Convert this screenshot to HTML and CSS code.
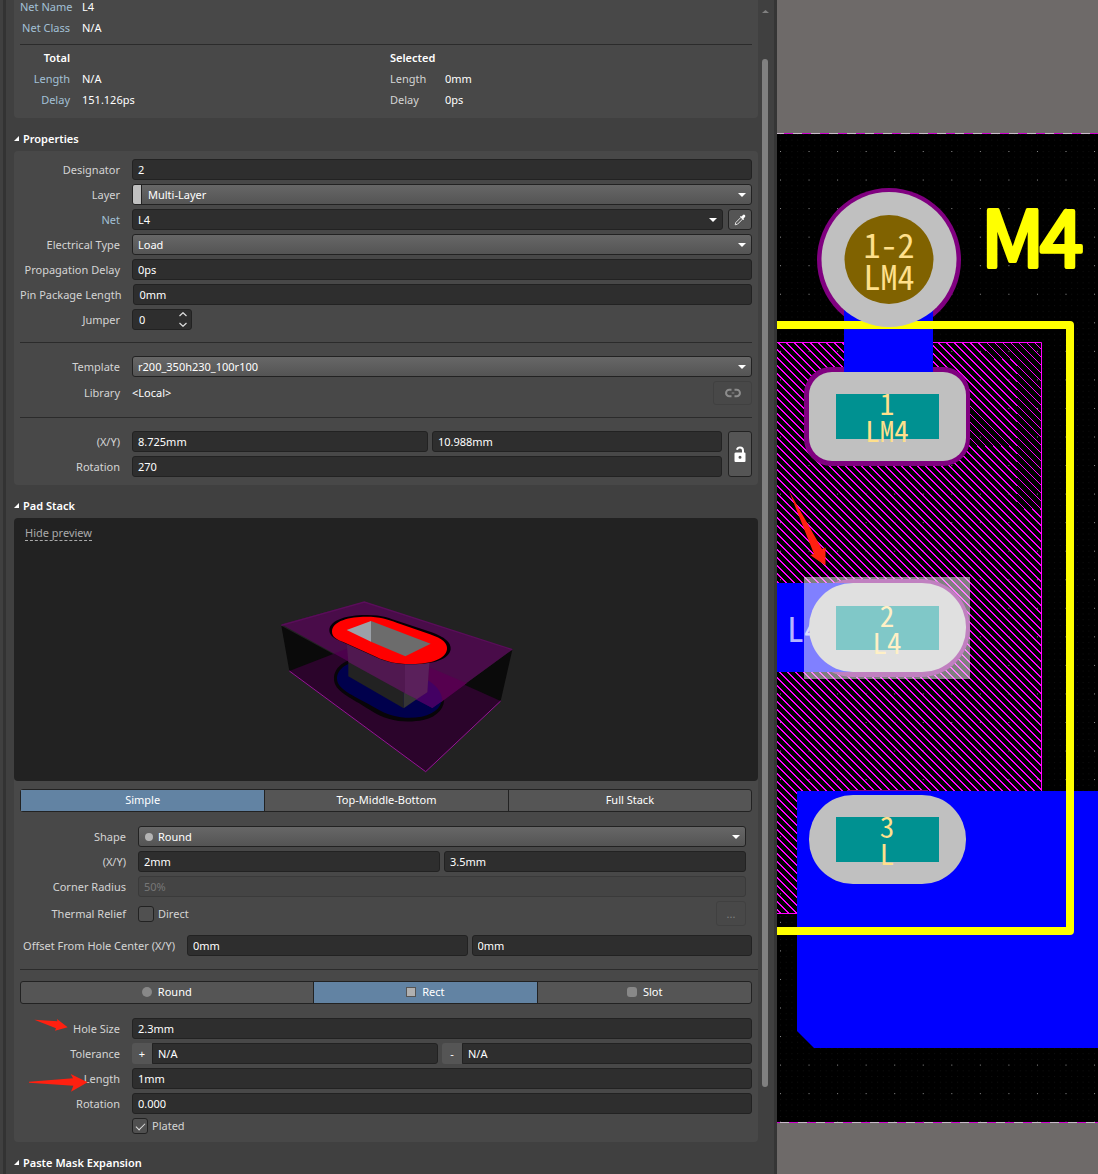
FILE: index.html
```html
<!DOCTYPE html>
<html lang="en">
<head>
<meta charset="utf-8">
<title>Pad Properties</title>
<link rel="stylesheet" href="styles.css">
</head>
<body>
<div class="workspace">
  <aside class="panel">
    <div class="panel-body">
      <section class="card net-info">
        <dl class="facts">
          <dt>Net Name</dt><dd>L4</dd>
          <dt>Net Class</dt><dd>N/A</dd>
        </dl>
        <hr class="rule">
        <div class="halves">
          <dl class="facts">
            <dt class="facts-title">Total</dt><dd></dd>
            <dt>Length</dt><dd>N/A</dd>
            <dt>Delay</dt><dd>151.126ps</dd>
          </dl>
          <dl class="facts facts-plain">
            <dt class="facts-title">Selected</dt><dd></dd>
            <dt>Length</dt><dd>0mm</dd>
            <dt>Delay</dt><dd>0ps</dd>
          </dl>
        </div>
      </section>

      <h2 class="heading"><svg class="caret" viewBox="0 0 5 5"><path d="M5 0V5H0Z"/></svg>Properties</h2>
      <section class="card padded">
        <div class="stack">
          <div class="row"><label for="designator">Designator</label><input class="field" id="designator" value="2"></div>
          <div class="row"><label for="layer">Layer</label><div class="drop drop-layer"><span class="swatch"></span><select id="layer"><option>Multi-Layer</option></select></div></div>
          <div class="row"><label class="linked" for="net">Net</label>
            <div class="drop drop-dark"><select id="net"><option>L4</option></select></div>
            <button class="btn icon-btn" aria-label="Pick net"><svg width="12" height="12" viewBox="0 0 12 12"><path d="M7 3.300 8.700 5 3.500 10.200 1.200 10.800 1.800 8.500Z" fill="none" stroke="#e4e4e4"/><path d="M6 2.600 6.800 1.900 7.500 2.500 9 .900Q10 .200 10.900 1.100T11 3L9.500 4.500 10.100 5.200 9.300 6Z" fill="#fff"/></svg></button>
          </div>
          <div class="row"><label for="etype">Electrical Type</label><div class="drop"><select id="etype"><option>Load</option></select></div></div>
          <div class="row"><label for="pdelay">Propagation Delay</label><input class="field" id="pdelay" value="0ps"></div>
          <div class="row"><label for="plength">Pin Package Length</label><input class="field" id="plength" value="0mm"></div>
          <div class="row"><label for="jumper">Jumper</label>
            <div class="spin"><input id="jumper" value="0"><svg width="8" height="15" viewBox="0 0 8 15"><path d="M.500 4 4 .700 7.500 4M.500 11 4 14.300 7.500 11" fill="none" stroke="#ddd" stroke-width="1.200"/></svg></div>
          </div>
        </div>
        <hr class="rule spaced">
        <div class="stack">
          <div class="row"><label for="template">Template</label><div class="drop"><select id="template"><option>r200_350h230_100r100</option></select></div></div>
          <div class="row"><span class="label">Library</span><output class="plain">&lt;Local&gt;</output>
            <button class="btn ghost link-btn" aria-label="Link library" disabled><svg width="16" height="10" viewBox="0 0 16 10"><path d="M6.500 1.700H4.300A3.200 3.200 0 0 0 4.300 8.200H6.500M9.500 1.700H11.700A3.200 3.200 0 0 1 11.700 8.200H9.500" fill="none" stroke="#8c8c8c" stroke-width="2"/><path d="M6.700 4.500H9.300V5.500H6.700Z" fill="#8c8c8c"/></svg></button>
          </div>
        </div>
        <hr class="rule spaced">
        <div class="locked">
          <div class="stack">
            <div class="row"><label for="posx">(X/Y)</label><div class="pair pair-pos"><input class="field" id="posx" value="8.725mm"><input class="field" aria-label="Y" value="10.988mm"></div></div>
            <div class="row"><label for="rot">Rotation</label><input class="field" id="rot" value="270"></div>
          </div>
          <button class="btn icon-btn" aria-label="Unlocked"><svg width="12" height="17" viewBox="0 0 12 17"><path d="M3 3.700Q3.500 1.500 6 1.500 9 1.500 9 4.500V8" fill="none" stroke="#fff" stroke-width="2"/><path fill-rule="evenodd" fill="#fff" d="M2 6.500H10.500Q11.500 6.500 11.500 7.500V15Q11.500 16 10.500 16H1.500Q.500 16 .500 15V7.500Q.500 6.500 2 6.500ZM6 9.800A1.500 1.500 0 1 0 6 12.800 1.500 1.500 0 1 0 6 9.800Z"/></svg></button>
        </div>
      </section>

      <h2 class="heading"><svg class="caret" viewBox="0 0 5 5"><path d="M5 0V5H0Z"/></svg>Pad Stack</h2>
      <section class="card">
        <div class="preview">
          <a class="hide-link" href="#preview">Hide preview</a>
          <svg class="model" id="preview" viewBox="-27 0 810 603">
            <path d="M64 137 517 384 757 209 722 363 497 575 88 273Z" fill="#0a0a0a"/>
            <path d="M88 273 320 183 722 363 497 575Z" fill="#2b042b"/>
            <path d="M330 238C270 226 222 254 222 296 222 335 270 350 330 390 380 425 440 430 490 420 535 410 556 380 552 350 548 325 520 305 480 288Z" fill="#080508"/>
            <path d="M330 246C275 236 231 262 231 296 231 330 290 350 345 383 395 413 440 418 485 410 530 400 550 375 544 348 538 325 510 310 480 296Z" fill="#00004c"/>
            <path d="M64 133 313 65 757 209 517 384Z" fill="#600060" fill-opacity=".640"/>
            <path d="M64 136 313 66 757 209" fill="none" stroke="#5a0d5a" stroke-width="4"/>
            <path d="M88 273 497 575 722 363" fill="none" stroke="#981498" stroke-width="3"/>
            <path d="M508 262 620 310 545 365 502 337Z" fill="#56004f"/>
            <path d="M502 300Q545 325 547 363L517 384 465 357 502 337Z" fill="#430063"/>
            <path d="M265 240V289L431 385V330Z" fill="#222"/>
            <path d="M431 330V385L470 358Z" fill="#353535"/>
            <path d="M260 188 435 250V340L265 246Z" fill="#501850"/>
            <path d="M435 250 508 248 502 337 470 358 435 340Z" fill="#5a205b"/>
            <path d="M208 151C208 119 265 105 315 105 365 104 390 115 415 124L515 157C553 171 574 187 572 208 568 238 520 253 455 253 410 253 375 245 345 230L252 188C225 178 208 168 208 151Z" fill="#050005"/>
            <path d="M216 155C216 122 270 110 318 110 360 110 385 118 410 128L510 163C548 176 563 190 561 208 557 239 510 253 450 252 410 252 375 244 348 230L255 188C230 178 216 171 216 155Z" fill="#f00"/>
            <path d="M260 150 333 123V185Z" fill="#9ba1a8"/>
            <path d="M333 123 512 191 436 229 333 185Z" fill="#6c6c6c"/>
          </svg>
        </div>
        <div class="pad-form">
          <div class="segments">
            <button class="on" aria-pressed="true">Simple</button><button>Top-Middle-Bottom</button><button>Full Stack</button>
          </div>
          <div class="stack inset">
            <div class="row"><label for="shape">Shape</label><div class="drop drop-shape"><span class="dot"></span><select id="shape"><option>Round</option></select></div></div>
            <div class="row"><label for="sizex">(X/Y)</label><div class="pair"><input class="field" id="sizex" value="2mm"><input class="field" aria-label="Y size" value="3.5mm"></div></div>
            <div class="row"><label for="radius">Corner Radius</label><input class="field" id="radius" value="50%" disabled></div>
            <div class="row"><span class="label">Thermal Relief</span><label class="check"><input type="checkbox">Direct</label><button class="btn ghost more-btn" disabled>...</button></div>
          </div>
          <div class="row offset"><label for="offx">Offset From Hole Center (X/Y)</label><div class="pair"><input class="field" id="offx" value="0mm"><input class="field" aria-label="Y offset" value="0mm"></div></div>
          <hr class="rule wide">
          <div class="segments holes">
            <button><span class="mark round"></span>Round</button><button class="on" aria-pressed="true"><span class="mark rect"></span>Rect</button><button><span class="mark slot"></span>Slot</button>
          </div>
          <div class="stack">
            <div class="row"><label for="hole">Hole Size</label><input class="field" id="hole" value="2.3mm">
              <svg class="arrow arrow-hole" viewBox="103 717 100 36"><path d="M103 719 172 724 171 717 203 742 165 752 168 745Z"/></svg></div>
            <div class="row"><label for="tolp">Tolerance</label><div class="pair pair-tol">
              <div class="signed"><span>+</span><input class="field" id="tolp" value="N/A"></div>
              <div class="signed"><span>-</span><input class="field" aria-label="Minus tolerance" value="N/A"></div></div></div>
            <div class="row"><label for="len">Length</label><input class="field" id="len" value="1mm">
              <svg class="arrow arrow-length" viewBox="87 882 177 54"><path d="M87 905 219 895 212 882 263 907 213 935 220 917 87 908Z"/></svg></div>
            <div class="row"><label for="hrot">Rotation</label><input class="field" id="hrot" value="0.000"></div>
            <div class="row"><span class="label"></span><label class="check"><input type="checkbox" checked>Plated</label></div>
          </div>
        </div>
      </section>

      <h2 class="heading"><svg class="caret" viewBox="0 0 5 5"><path d="M5 0V5H0Z"/></svg>Paste Mask Expansion</h2>
    </div>
    <div class="scroll">
      <svg width="7" height="3" viewBox="0 0 7 3"><path d="M0 3 3.500 0 7 3Z" fill="#808080"/></svg>
      <div class="thumb"></div>
    </div>
  </aside>

  <svg class="board" viewBox="777 0 321 1174" preserveAspectRatio="xMinYMin slice">
    <defs>
      <pattern id="minor" x="780" y="151" width="5.710" height="5.710" patternUnits="userSpaceOnUse"><rect width="1" height="1" fill="#101010"/></pattern>
      <linearGradient id="hatch" gradientUnits="userSpaceOnUse" x1="777" y1="342" x2="781" y2="338" spreadMethod="repeat">
        <stop offset="0" stop-color="#ff00ff"/><stop offset=".130" stop-color="#ff00ff"/><stop offset=".130" stop-color="#000"/><stop offset="1" stop-color="#000"/>
      </linearGradient>
      <pattern id="major" x="780" y="151" width="28.550" height="28.550" patternUnits="userSpaceOnUse"><rect width="1" height="1" fill="#8a8a8a"/></pattern>
    </defs>
    <rect x="777" width="321" height="1174" fill="#6e6a69"/>
    <rect x="777" y="133" width="321" height="990" fill="#000"/>
    <rect x="777" y="134" width="321" height="988" fill="url(#minor)" shape-rendering="crispEdges"/>
    <path d="M777 133.500H1098M777 1122.500H1098" stroke="#d000d0"/>
    <path d="M775 133.500H1098" stroke="#c9b9c9" stroke-dasharray="9 9"/>
    <path d="M780 1122.500H1098" stroke="#c9b9c9" stroke-dasharray="9 9"/>
    <rect x="777" y="342" width="264" height="571" fill="url(#hatch)"/>
    <path d="M777 342.500H1041.500V913.500H777" fill="none" stroke="#f0f"/>
    <rect x="777" y="134" width="321" height="988" fill="url(#major)" shape-rendering="crispEdges"/>

    <circle cx="889" cy="260" r="72" fill="#800080"/>
    <rect x="804" y="367" width="166" height="99" rx="27" fill="#800080"/>
    <rect x="804" y="579" width="166" height="98" rx="49" fill="#800080"/>
    <path d="M847 790.500H928" stroke="#800080"/>
    <rect x="844" y="300" width="89" height="80" fill="#00f"/>
    <path d="M777 583H853A44 44 0 0 1 853 672H777Z" fill="#00f"/>
    <path d="M797 791H1098V1048H814L797 1031Z" fill="#00f"/>
    <text x="787" y="642" class="trace-name">L4</text>
    <path d="M770 325H1070V931H770" fill="none" stroke="#ff0" stroke-width="8" stroke-linejoin="round"/>

    <circle cx="889" cy="259.500" r="67.500" fill="#c0c0c0"/>
    <circle cx="889" cy="259.500" r="44.500" fill="#806200"/>
    <rect x="809" y="372" width="157" height="89" rx="23" fill="#c0c0c0"/>
    <rect x="809" y="583" width="157" height="89" rx="44" fill="#c0c0c0"/>
    <rect x="809" y="795" width="157" height="89" rx="44" fill="#c0c0c0"/>
    <path d="M836 394H939V439H836ZM836 606H939V650H836ZM836 817H939V862H836Z" fill="#009191"/>
    <g class="via-text"><text x="889" y="258">1-2</text><text x="889" y="290">LM4</text></g>
    <g class="pad-text">
      <text x="887" y="415">1</text><text x="887" y="442">LM4</text>
      <text x="887" y="627">2</text><text x="887" y="654">L4</text>
      <text x="887" y="838">3</text><text x="887" y="865">L</text>
    </g>
    <rect x="804" y="577" width="166" height="102" fill="#fff" fill-opacity=".500"/>
    <text x="981 1040" y="267" class="silk">M4</text>
    <path d="M789 491 822 549 825.500 547.500V565.500L810 555 814 554Z" fill="#ff2010"/>
  </svg>
</div>
</body>
</html>
```
FILE: styles.css
```css
* { box-sizing: border-box; }

body {
  margin: 0;
  background: #404040;
  color: #fff;
  font: 11px/16px "Noto Sans", "Open Sans", sans-serif;
}

input, select, button { font: inherit; color: inherit; margin: 0; border-radius: 3px; }
dl, dd, h2 { margin: 0; }

.workspace {
  display: grid;
  grid-template-columns: 777fr 321fr;
  height: 100vh;
  overflow: hidden;
}

.panel {
  display: flex;
  min-width: 0;
  overflow: hidden;
  border-left: 3px solid #404040;
  border-right: 3px solid #353535;
  background: linear-gradient(90deg, #333 3px, #404040 3px);
}
.panel-body { flex: 1; min-width: 0; padding: 3px 0 0 11px; }

.card { border-radius: 4px; background: #484848; }
.padded { padding: 8px 6px; }

.net-info { padding: 0 6px 8px; border-radius: 0 0 4px 4px; }
.facts {
  display: grid;
  grid-template-columns: 50px 1fr;
  column-gap: 12px;
  line-height: 21px;
}
.net-info > .facts { margin-top: -7px; }
.facts dt { color: #a3c0d6; text-align: right; white-space: nowrap; }
.facts .facts-title { color: #fff; font-weight: 600; }
.facts-plain { grid-template-columns: 43px 1fr; padding-left: 4px; }
.facts-plain dt { color: #d4d4d4; text-align: left; }
.halves { display: grid; grid-template-columns: 1fr 1fr; padding-top: 2px; }

.rule { height: 1px; margin: 6px 0 0; border: 0; background: #2b2b2b; }
.spaced { margin: 12px 0 13px; }
.wide { margin: 13px -6px 11px 0; }

.heading {
  display: flex;
  align-items: center;
  gap: 4px;
  height: 33px;
  padding-top: 8px;
  font-size: 11px;
  font-weight: 600;
}
.caret { width: 5px; height: 5px; fill: #fff; }

.stack { display: flex; flex: 1; flex-direction: column; gap: 4px; min-width: 0; }
.row { position: relative; display: flex; align-items: center; min-width: 0; }
.row > label:first-child, .label {
  flex: 0 0 100px;
  margin-right: 12px;
  color: #d4d4d4;
  text-align: right;
  white-space: nowrap;
}
.row > .linked:first-child { color: #a3c0d6; }

.field {
  flex: 1;
  width: 100%;
  min-width: 0;
  height: 21px;
  padding: 0 5px;
  border: 1px solid #222;
  background: #2e2e2e;
}
.field:disabled { border-color: #3a3a3a; background: #444; color: #777; }

.drop {
  position: relative;
  flex: 1;
  min-width: 0;
  height: 21px;
  border: 1px solid #222;
  border-radius: 3px;
  background: linear-gradient(#676767, #545454);
}
.drop::after {
  content: "";
  position: absolute;
  top: 8px;
  right: 5px;
  border: 4px solid transparent;
  border-top-color: #fff;
  border-bottom: 0;
}
.drop select {
  display: block;
  width: 100%;
  height: 19px;
  padding: 0 5px;
  border: 0;
  background: none;
  appearance: none;
}
.drop-dark { background: #2e2e2e; }
.drop-layer, .drop-shape { display: flex; align-items: center; }
.drop-layer select { padding-left: 6px; }
.swatch { flex: 0 0 9px; height: 19px; border-right: 1px solid #222; border-radius: 2px 0 0 2px; background: #c0c0c0; }
.dot { flex: 0 0 8px; height: 8px; margin-left: 6px; border-radius: 4px; background: #b4b4b4; }

.btn {
  display: flex;
  align-items: center;
  justify-content: center;
  padding: 0;
  border: 1px solid #222;
  background: #555;
}
.icon-btn { flex: 0 0 24px; height: 21px; margin-left: 5px; }
.ghost { border-color: #404040; background: none; color: #808080; }
.link-btn { width: 39px; height: 24px; }
.more-btn { width: 30px; height: 25px; }
.plain { flex: 1; }

.spin {
  display: flex;
  align-items: center;
  width: 60px;
  height: 21px;
  padding-right: 4px;
  border: 1px solid #222;
  border-radius: 3px;
  background: #2e2e2e;
}
.spin input { flex: 1; width: 0; height: 19px; padding: 0 6px; border: 0; background: none; }

.locked { display: flex; }
.locked .icon-btn { height: auto; margin-left: 6px; }

.pair { display: grid; flex: 1; grid-template-columns: 1fr 1fr; gap: 4px; min-width: 0; }
.pair-pos { grid-template-columns: 51fr 50fr; }
.pair-tol { grid-template-columns: 306fr 310fr; }
.signed { display: flex; min-width: 0; }
.signed span { flex: 0 0 20px; border-radius: 3px 0 0 3px; background: #555; line-height: 21px; text-align: center; }
.signed .field { border-radius: 0 3px 3px 0; }

.preview {
  display: flex;
  flex-direction: column;
  align-items: center;
  justify-content: space-between;
  height: 263px;
  padding-top: 7px;
  border-radius: 4px;
  background: #222;
}
.hide-link {
  align-self: flex-start;
  margin-left: 11px;
  border-bottom: 1px dashed #aaa;
  color: #aaa;
  line-height: 15px;
  text-decoration: none;
}
.model { width: 270px; height: 201px; }

.pad-form { padding: 8px 6px; }
.segments {
  display: grid;
  grid-template-columns: 1fr 1fr 1fr;
  height: 23px;
  margin-bottom: 14px;
  border: 1px solid #222;
  border-radius: 3px;
  background: #555;
}
.holes { grid-template-columns: 292fr 225fr 214fr; }
.segments button {
  display: flex;
  align-items: center;
  justify-content: center;
  gap: 6px;
  padding: 0 0 1px;
  border: 0;
  border-radius: 0;
  background: none;
}
.segments button + button { border-left: 1px solid #222; }
.segments .on { background: #6283a3; }
.mark { width: 10px; height: 10px; background: #888; }
.round { border-radius: 5px; }
.rect { border: 1px solid #555; background: #b0b0b0; }
.slot { border-radius: 3px; }

.inset { padding-right: 6px; }
.inset .row > label:first-child, .inset .label { flex-basis: 106px; }
.offset { margin-top: 9px; }
.row.offset > label:first-child { flex-basis: 155px; }

.row > .check { display: flex; flex: 1; align-items: center; gap: 4px; color: #d4d4d4; }
.check input {
  width: 16px;
  height: 16px;
  border: 1px solid #222;
  background: #505050;
  appearance: none;
}
.check input:checked::after {
  content: "";
  display: block;
  width: 4px;
  height: 8px;
  margin: 2px auto 0;
  border: solid #e0e0e0;
  border-width: 0 1px 1px 0;
  transform: rotate(45deg);
}

.arrow { position: absolute; fill: #ff2010; }
.arrow-hole { top: 1px; left: 14px; width: 34px; height: 12px; }
.arrow-length { top: 6px; left: 9px; width: 59px; height: 18px; }

.scroll { flex: 0 0 16px; display: flex; flex-direction: column; align-items: center; padding: 10px 2px 0 0; }
.thumb { flex: 1; width: 6px; margin: 46px 0 87px; border-radius: 3px; background: #808080; }

.board { display: block; width: 100%; height: 100vh; }
.via-text, .pad-text { fill: #ffe08c; text-anchor: middle; }
.via-text, .pad-text, .trace-name { font-family: "Noto Sans Mono CJK SC", "DejaVu Sans Mono", monospace; }
.via-text { font-size: 34px; }
.pad-text { font-size: 29px; }
.trace-name { fill: #b4b4ff; font-size: 34px; }
.silk {
  fill: #ff0;
  stroke: #ff0;
  stroke-width: 4px;
  stroke-linejoin: round;
  font-family: "Noto Sans CJK SC", sans-serif;
  font-size: 78px;
}
```
